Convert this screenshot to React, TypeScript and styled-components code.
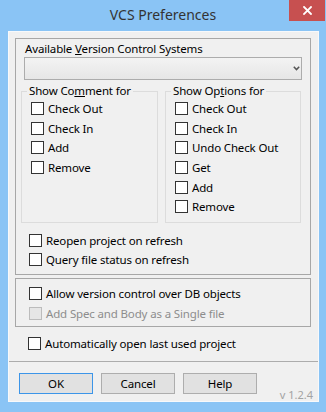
import React from 'react';
import styled, { createGlobalStyle } from 'styled-components';

const Global = createGlobalStyle`
  html, body { margin: 0; padding: 0; background: #8ac4f5; }
  body { font-family: "Noto Sans", "Open Sans", sans-serif; -webkit-font-smoothing: antialiased; }
  * { box-sizing: border-box; }
`;

const Window = styled.div`
  width: 326px;
  height: 412px;
  background: #8ac4f5;
  display: flex;
  flex-direction: column;
`;

const TitleBar = styled.div`
  height: 31px;
  flex: none;
  display: grid;
  grid-template-columns: 1fr auto 1fr;
`;

const Title = styled.div`
  grid-column: 2;
  font-size: 14px;
  line-height: 29px;
  color: #333;
`;

const CloseButton = styled.div`
  grid-column: 3;
  justify-self: end;
  align-self: start;
  width: 36px;
  height: 21px;
  margin-right: 1px;
  background: #c75050;
  display: flex;
  align-items: center;
  justify-content: center;
`;

const Client = styled.div`
  flex: 1;
  margin: 0 7px 10px 8px;
  background: #f0f0f0;
  border: 1px solid #f7f9fb;
  display: flex;
  flex-direction: column;
  font-size: 11.5px;
  letter-spacing: -0.15px;
`;

const Content = styled.div`
  flex: 1;
  padding: 6px 7px 0 6px;
  display: flex;
  flex-direction: column;
`;

const Panel = styled.div<{ $top?: number }>`
  border: 1px solid #a7a7a7;
  margin-top: ${p => p.$top ?? 0}px;
`;

const FieldLabel = styled.div`
  padding: 2px 0 0 9px;
  height: 18px;
  line-height: 16px;
  color: #000;
`;

const Combo = styled.div`
  margin: 0 8px;
  height: 23px;
  border: 1px solid #acacac;
  background: linear-gradient(#f3f3f3, #e6e6e6);
  display: flex;
  justify-content: flex-end;
  align-items: center;
  padding-right: 1px;
`;

const GroupsRow = styled.div`
  display: grid;
  grid-template-columns: 137px 136px;
  column-gap: 7px;
  margin: 3px 9px 0 5px;
`;

const Group = styled.fieldset`
  margin: 0;
  min-width: 0;
  padding: 0 0 5px 0;
  border: 1px solid #dcdcdc;
`;

const Legend = styled.legend`
  margin-left: 5px;
  padding: 0 2px;
  line-height: 16px;
  color: #000;
`;

const Rows = styled.div<{ $left: number; $top?: number; $bottom?: number }>`
  padding: ${p => p.$top ?? 0}px 0 ${p => p.$bottom ?? 0}px ${p => p.$left}px;
`;

const Row = styled.label<{ $disabled?: boolean }>`
  display: flex;
  align-items: center;
  gap: 4px;
  height: 19.6px;
  color: ${p => (p.$disabled ? '#8d8d8d' : '#000')};
  white-space: nowrap;
`;

const Box = styled.span<{ $disabled?: boolean }>`
  flex: none;
  width: 13px;
  height: 13px;
  border: 1px solid ${p => (p.$disabled ? '#bcbcbc' : '#333')};
  background: ${p => (p.$disabled ? '#e6e6e6' : '#fff')};
`;

const StandaloneRow = styled.div<{ $top: number }>`
  margin-top: ${p => p.$top}px;
  padding-left: 13px;
`;

const Separator = styled.div`
  height: 1px;
  flex: none;
  background: #acacac;
`;

const ButtonBar = styled.div`
  height: 39px;
  flex: none;
  display: flex;
  align-items: flex-start;
  gap: 8px;
  padding: 11px 5px 0 10px;
`;

const Button = styled.div<{ $default?: boolean }>`
  width: 74px;
  height: 21px;
  border: 1px solid ${p => (p.$default ? '#3c95e8' : '#adadad')};
  background: #e1e1e1;
  line-height: 19px;
  text-align: center;
  color: #000;
`;

const Version = styled.div`
  margin-left: auto;
  align-self: flex-end;
  margin-bottom: 0;
  font-size: 11px;
  letter-spacing: 0;
  line-height: 12px;
  color: #a3a3a3;
`;

type CheckProps = { label: React.ReactNode; disabled?: boolean };
const Check = ({ label, disabled }: CheckProps) => (
  <Row $disabled={disabled}>
    <Box $disabled={disabled} />
    <span>{label}</span>
  </Row>
);

export default function App() {
  return (
    <>
      <Global />
      <Window>
        <TitleBar>
          <Title>VCS Preferences</Title>
          <CloseButton>
            <svg width="9" height="9" viewBox="0 0 9 9">
              <path d="M1 1L8 8M8 1L1 8" stroke="#fff" strokeWidth="1.8" strokeLinecap="square" />
            </svg>
          </CloseButton>
        </TitleBar>
        <Client>
          <Content>
            <Panel>
              <FieldLabel>
                Available <u>V</u>ersion Control Systems
              </FieldLabel>
              <Combo>
                <svg width="7" height="5" viewBox="0 0 7 5">
                  <path d="M0.8 0.8L3.5 3.6L6.2 0.8" stroke="#555" strokeWidth="1.5" fill="none" />
                </svg>
              </Combo>
              <GroupsRow>
                <Group>
                  <Legend>
                    Show Co<u>m</u>ment for
                  </Legend>
                  <Rows $left={9}>
                    <Check label="Check Out" />
                    <Check label="Check In" />
                    <Check label="Add" />
                    <Check label="Remove" />
                  </Rows>
                </Group>
                <Group>
                  <Legend>
                    Show Op<u>t</u>ions for
                  </Legend>
                  <Rows $left={9}>
                    <Check label="Check Out" />
                    <Check label="Check In" />
                    <Check label="Undo Check Out" />
                    <Check label="Get" />
                    <Check label="Add" />
                    <Check label="Remove" />
                  </Rows>
                </Group>
              </GroupsRow>
              <Rows $left={13} $top={8} $bottom={4}>
                <Check label="Reopen project on refresh" />
                <Check label="Query file status on refresh" />
              </Rows>
            </Panel>
            <Panel $top={3}>
              <Rows $left={13} $top={5} $bottom={3}>
                <Check label="Allow version control over DB objects" />
                <Check label="Add Spec and Body as a Single file" disabled />
              </Rows>
            </Panel>
            <StandaloneRow $top={7}>
              <Check label="Automatically open last used project" />
            </StandaloneRow>
          </Content>
          <Separator />
          <ButtonBar>
            <Button $default>OK</Button>
            <Button>Cancel</Button>
            <Button>Help</Button>
            <Version>v 1.2.4</Version>
          </ButtonBar>
        </Client>
      </Window>
    </>
  );
}
